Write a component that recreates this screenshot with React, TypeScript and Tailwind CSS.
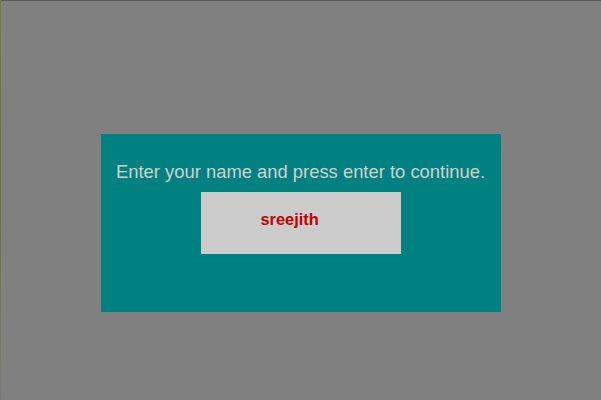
export default function App() {
  return (
    <div className="relative w-[601px] h-[400px] bg-[#808080] overflow-hidden" style={{ fontFamily: '"Liberation Sans", Arial, sans-serif' }}>
      <div className="absolute left-0 top-0 w-full h-px bg-[#585858]" />
      <div className="absolute left-0 top-0 w-px h-[400px] bg-gradient-to-b from-[#7a7a3a] via-[#6e7040] to-[#7c7c72]" />
      <div className="flex flex-col items-center pt-[134px]">
        <div className="w-[400px] h-[178px] bg-[#008080] flex flex-col items-center pt-[28px]">
          <div className="text-[18.4px] leading-[20px] text-[#d0d0d0] whitespace-nowrap">Enter your name and press enter to continue.</div>
          <div className="mt-[10px] w-[200px] h-[62px] bg-[#cccccc] pl-[60px] pt-[18px]">
            <div className="text-[16.4px] leading-[18px] font-bold text-[#c00000]">sreejith</div>
          </div>
        </div>
      </div>
    </div>
  );
}
